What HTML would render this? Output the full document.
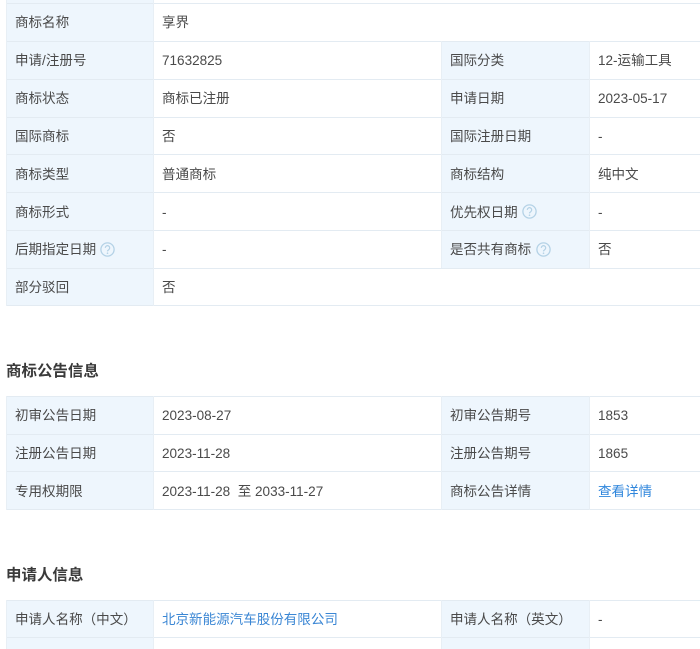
<!DOCTYPE html>
<html lang="zh"><head><meta charset="utf-8">
<style>
html,body{margin:0;padding:0;background:#fff}
body{width:700px;height:649px;position:relative;overflow:hidden}
#w{position:absolute;left:0;top:0;width:700px;height:649px;overflow:hidden;filter:blur(.3px);font-family:"Liberation Sans","Noto Sans CJK SC",sans-serif;font-size:13.54px;color:#4a4a4a}
.bg{position:absolute;left:6px;width:147.5px;background:#eef6fd}
.bg2{position:absolute;left:441.5px;width:147.5px;background:#eef6fd}
.h{position:absolute;height:1px;background:#e3ebf2;left:6px;right:0}
.v{position:absolute;width:1px;background:#e8eff5}
.t{position:absolute;line-height:20px;height:20px;white-space:nowrap}
.a{color:#3a86d4}
.k{color:#2f86dc}
.hd{position:absolute;left:6px;font-size:15.47px;font-weight:bold;color:#3a3a3a;line-height:22px;white-space:nowrap}
svg{position:absolute}
</style></head><body><div id="w">

<div class="bg" style="top:0;height:306px"></div>
<div class="bg2" style="top:41px;height:227px"></div>
<div class="h" style="top:3px"></div>
<div class="h" style="top:41px"></div>
<div class="h" style="top:79px"></div>
<div class="h" style="top:117px"></div>
<div class="h" style="top:154px"></div>
<div class="h" style="top:192px"></div>
<div class="h" style="top:230px"></div>
<div class="h" style="top:268px"></div>
<div class="h" style="top:305px"></div>
<div class="v" style="left:6px;top:0;height:306px"></div>
<div class="v" style="left:153px;top:0;height:306px"></div>
<div class="v" style="left:441px;top:41px;height:227px"></div>
<div class="v" style="left:589px;top:41px;height:227px"></div>

<div class="t" style="left:15px;top:13px">商标名称</div><div class="t" style="left:162px;top:13px">享界</div>
<div class="t" style="left:15px;top:51px">申请/注册号</div><div class="t" style="left:162px;top:51px">71632825</div><div class="t" style="left:450px;top:51px">国际分类</div><div class="t" style="left:598px;top:51px">12-运输工具</div>
<div class="t" style="left:15px;top:89px">商标状态</div><div class="t" style="left:162px;top:89px">商标已注册</div><div class="t" style="left:450px;top:89px">申请日期</div><div class="t" style="left:598px;top:89px">2023-05-17</div>
<div class="t" style="left:15px;top:127px">国际商标</div><div class="t" style="left:162px;top:127px">否</div><div class="t" style="left:450px;top:127px">国际注册日期</div><div class="t" style="left:598px;top:127px">-</div>
<div class="t" style="left:15px;top:165px">商标类型</div><div class="t" style="left:162px;top:165px">普通商标</div><div class="t" style="left:450px;top:165px">商标结构</div><div class="t" style="left:598px;top:165px">纯中文</div>
<div class="t" style="left:15px;top:203px">商标形式</div><div class="t" style="left:162px;top:203px">-</div><div class="t" style="left:450px;top:203px">优先权日期</div><div class="t" style="left:598px;top:203px">-</div>
<div class="t" style="left:15px;top:240px">后期指定日期</div><div class="t" style="left:162px;top:240px">-</div><div class="t" style="left:450px;top:240px">是否共有商标</div><div class="t" style="left:598px;top:240px">否</div>
<div class="t" style="left:15px;top:278px">部分驳回</div><div class="t" style="left:162px;top:278px">否</div>

<svg style="left:522px;top:204px" width="15" height="15" viewBox="0 0 15 15"><circle cx="7.5" cy="7.5" r="6.6" fill="none" stroke="#b4d2e6" stroke-width="1.3"/><path d="M5.3 5.9a2.2 2.2 0 1 1 3.4 1.8c-.8.5-1.2.9-1.2 1.7" fill="none" stroke="#b4d2e6" stroke-width="1.2"/><circle cx="7.5" cy="11.2" r=".8" fill="#b4d2e6"/></svg>
<svg style="left:100px;top:241.500px" width="15" height="15" viewBox="0 0 15 15"><circle cx="7.5" cy="7.5" r="6.6" fill="none" stroke="#b4d2e6" stroke-width="1.3"/><path d="M5.3 5.9a2.2 2.2 0 1 1 3.4 1.8c-.8.5-1.2.9-1.2 1.7" fill="none" stroke="#b4d2e6" stroke-width="1.2"/><circle cx="7.5" cy="11.2" r=".8" fill="#b4d2e6"/></svg>
<svg style="left:536px;top:241.500px" width="15" height="15" viewBox="0 0 15 15"><circle cx="7.5" cy="7.5" r="6.6" fill="none" stroke="#b4d2e6" stroke-width="1.3"/><path d="M5.3 5.9a2.2 2.2 0 1 1 3.4 1.8c-.8.5-1.2.9-1.2 1.7" fill="none" stroke="#b4d2e6" stroke-width="1.2"/><circle cx="7.5" cy="11.2" r=".8" fill="#b4d2e6"/></svg>

<div class="hd" style="top:361px">商标公告信息</div>

<div class="bg" style="top:396px;height:114px"></div>
<div class="bg2" style="top:396px;height:114px"></div>
<div class="h" style="top:396px"></div>
<div class="h" style="top:434px"></div>
<div class="h" style="top:471px"></div>
<div class="h" style="top:509px"></div>
<div class="v" style="left:6px;top:396px;height:114px"></div>
<div class="v" style="left:153px;top:396px;height:114px"></div>
<div class="v" style="left:441px;top:396px;height:114px"></div>
<div class="v" style="left:589px;top:396px;height:114px"></div>

<div class="t" style="left:15px;top:406px">初审公告日期</div><div class="t" style="left:162px;top:406px">2023-08-27</div><div class="t" style="left:450px;top:406px">初审公告期号</div><div class="t" style="left:598px;top:406px">1853</div>
<div class="t" style="left:15px;top:444px">注册公告日期</div><div class="t" style="left:162px;top:444px">2023-11-28</div><div class="t" style="left:450px;top:444px">注册公告期号</div><div class="t" style="left:598px;top:444px">1865</div>
<div class="t" style="left:15px;top:482px">专用权期限</div><div class="t" style="left:162px;top:482px">2023-11-28&nbsp; 至 2033-11-27</div><div class="t" style="left:450px;top:482px">商标公告详情</div><div class="t k" style="left:598px;top:482px">查看详情</div>

<div class="hd" style="top:565px">申请人信息</div>

<div class="bg" style="top:600px;height:49px"></div>
<div class="bg2" style="top:600px;height:49px"></div>
<div class="h" style="top:600px"></div>
<div class="h" style="top:637px"></div>
<div class="v" style="left:6px;top:600px;height:49px"></div>
<div class="v" style="left:153px;top:600px;height:49px"></div>
<div class="v" style="left:441px;top:600px;height:49px"></div>
<div class="v" style="left:589px;top:600px;height:49px"></div>

<div class="t" style="left:15px;top:610px">申请人名称（中文）</div><div class="t a" style="left:162px;top:610px">北京新能源汽车股份有限公司</div><div class="t" style="left:450px;top:610px">申请人名称（英文）</div><div class="t" style="left:598px;top:610px">-</div>

</div></body></html>
